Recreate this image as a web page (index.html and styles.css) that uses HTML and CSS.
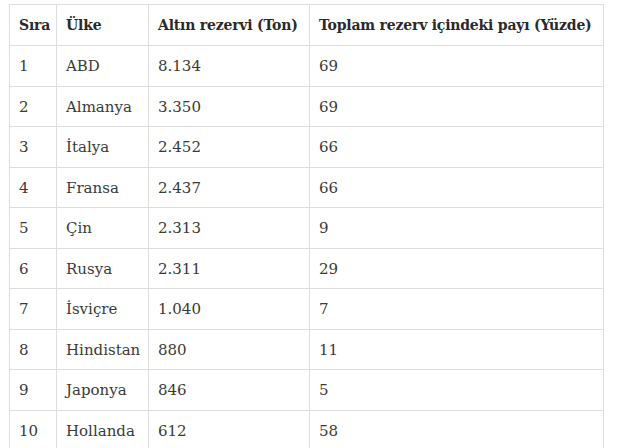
FILE: index.html
```html
<!DOCTYPE html>
<html lang="tr">
<head>
<meta charset="utf-8">
<link rel="stylesheet" href="styles.css">
</head>
<body>
<table class="gold">
  <colgroup>
    <col class="c1"><col class="c2"><col class="c3"><col class="c4">
  </colgroup>
  <thead>
    <tr><th>Sıra</th><th>Ülke</th><th>Altın rezervi (Ton)</th><th>Toplam rezerv içindeki payı (Yüzde)</th></tr>
  </thead>
  <tbody>
    <tr><td>1</td><td>ABD</td><td>8.134</td><td>69</td></tr>
    <tr><td>2</td><td>Almanya</td><td>3.350</td><td>69</td></tr>
    <tr><td>3</td><td>İtalya</td><td>2.452</td><td>66</td></tr>
    <tr><td>4</td><td>Fransa</td><td>2.437</td><td>66</td></tr>
    <tr><td>5</td><td>Çin</td><td>2.313</td><td>9</td></tr>
    <tr><td>6</td><td>Rusya</td><td>2.311</td><td>29</td></tr>
    <tr><td>7</td><td>İsviçre</td><td>1.040</td><td>7</td></tr>
    <tr><td>8</td><td>Hindistan</td><td>880</td><td>11</td></tr>
    <tr><td>9</td><td>Japonya</td><td>846</td><td>5</td></tr>
    <tr><td>10</td><td>Hollanda</td><td>612</td><td>58</td></tr>
  </tbody>
</table>
</body>
</html>
```
FILE: styles.css
```css
html, body {
  margin: 0;
  padding: 0;
  background: #ffffff;
}
body {
  padding: 4px 0 0 9px;
  font-family: "DejaVu Serif", "Liberation Serif", serif;
  color: #333333;
}
.gold {
  border-collapse: collapse;
  table-layout: fixed;
  width: 594px;
  font-size: 15px;
  font-variant-numeric: oldstyle-nums;
}
.c1 { width: 47px; }
.c2 { width: 92px; }
.c3 { width: 161px; }
.c4 { width: 294px; }
.gold th, .gold td {
  border: 1px solid #dddddd;
  padding: 0 0 0 9px;
  height: 40.5px;
  text-align: left;
  vertical-align: middle;
  white-space: nowrap;
  box-sizing: border-box;
}
.gold th {
  height: 41px;
  font-weight: bold;
  color: #2a2a2a;
  font-size: 14px;
  letter-spacing: -0.2px;
}
.gold td {
  color: #3a3a3a;
  padding-top: 1px;
}
```
